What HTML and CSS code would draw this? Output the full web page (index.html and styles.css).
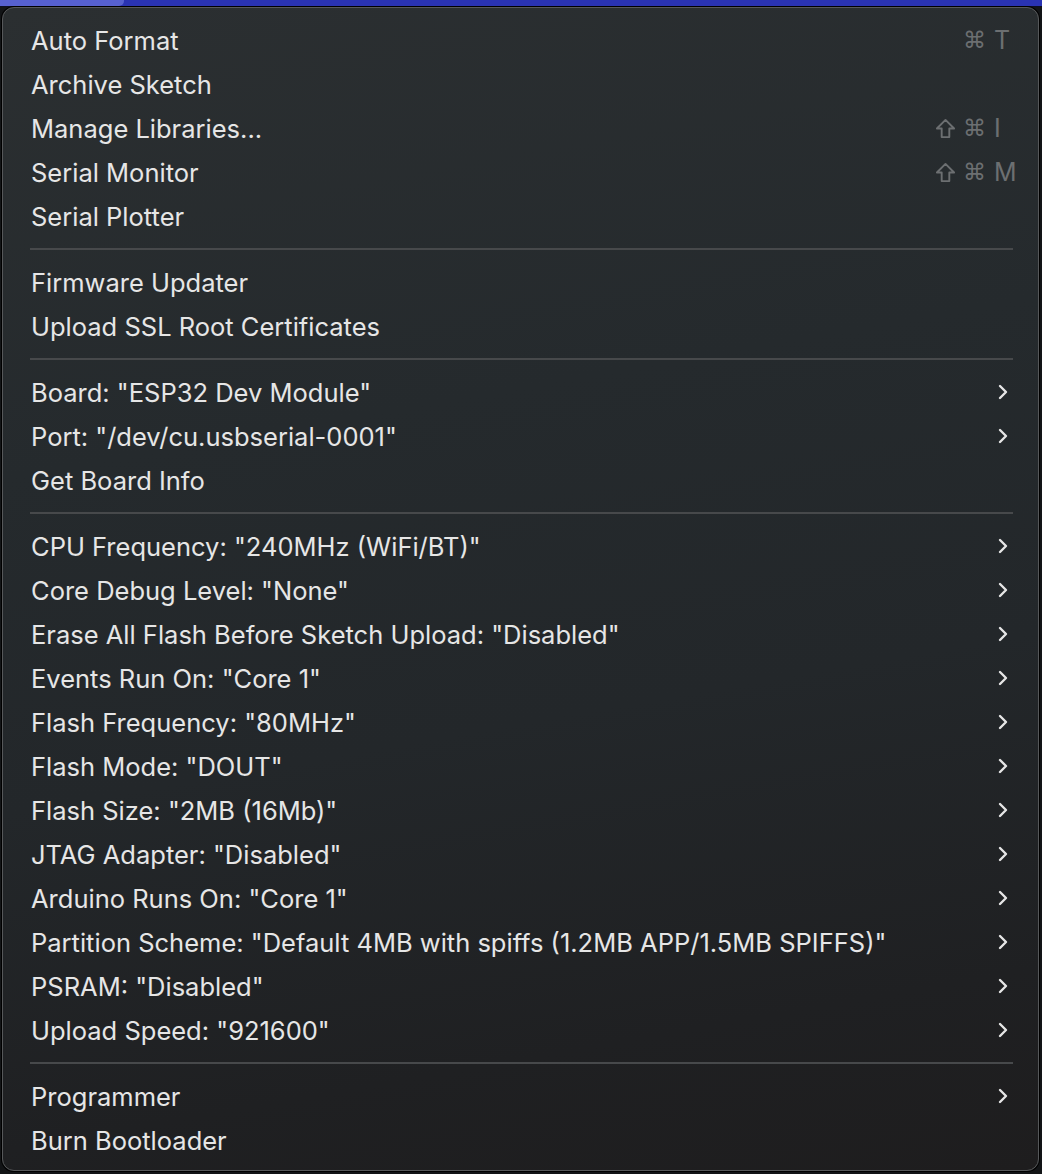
FILE: index.html
```html
<!DOCTYPE html>
<html>
<head>
<meta charset="utf-8">
<link rel="stylesheet" href="styles.css">
</head>
<body>
<div class="topbar"><div class="topbar-hl"></div></div>
<div class="menu">
  <div class="group">
    <div class="row"><span class="label">Auto Format</span><span class="sc"><span class="cmd">⌘</span><span class="key">T</span></span></div>
    <div class="row"><span class="label">Archive Sketch</span></div>
    <div class="row"><span class="label">Manage Libraries...</span><span class="sc"><svg class="shift" viewBox="0 0 22 22"><path d="M11 2 L20 11 L15 11 L15 20 L7 20 L7 11 L2 11 Z"/></svg><span class="cmd">⌘</span><span class="key">I</span></span></div>
    <div class="row"><span class="label">Serial Monitor</span><span class="sc"><svg class="shift" viewBox="0 0 22 22"><path d="M11 2 L20 11 L15 11 L15 20 L7 20 L7 11 L2 11 Z"/></svg><span class="cmd">⌘</span><span class="key">M</span></span></div>
    <div class="row"><span class="label">Serial Plotter</span></div>
  </div>
  <div class="sep"></div>
  <div class="group">
    <div class="row"><span class="label">Firmware Updater</span></div>
    <div class="row"><span class="label">Upload SSL Root Certificates</span></div>
  </div>
  <div class="sep"></div>
  <div class="group">
    <div class="row"><span class="label">Board: "ESP32 Dev Module"</span><svg class="chev" viewBox="0 0 10 16"><path d="M2 2 L8 8 L2 14"/></svg></div>
    <div class="row"><span class="label">Port: "/dev/cu.usbserial-0001"</span><svg class="chev" viewBox="0 0 10 16"><path d="M2 2 L8 8 L2 14"/></svg></div>
    <div class="row"><span class="label">Get Board Info</span></div>
  </div>
  <div class="sep"></div>
  <div class="group">
    <div class="row"><span class="label">CPU Frequency: "240MHz (WiFi/BT)"</span><svg class="chev" viewBox="0 0 10 16"><path d="M2 2 L8 8 L2 14"/></svg></div>
    <div class="row"><span class="label">Core Debug Level: "None"</span><svg class="chev" viewBox="0 0 10 16"><path d="M2 2 L8 8 L2 14"/></svg></div>
    <div class="row"><span class="label">Erase All Flash Before Sketch Upload: "Disabled"</span><svg class="chev" viewBox="0 0 10 16"><path d="M2 2 L8 8 L2 14"/></svg></div>
    <div class="row"><span class="label">Events Run On: "Core 1"</span><svg class="chev" viewBox="0 0 10 16"><path d="M2 2 L8 8 L2 14"/></svg></div>
    <div class="row"><span class="label">Flash Frequency: "80MHz"</span><svg class="chev" viewBox="0 0 10 16"><path d="M2 2 L8 8 L2 14"/></svg></div>
    <div class="row"><span class="label">Flash Mode: "DOUT"</span><svg class="chev" viewBox="0 0 10 16"><path d="M2 2 L8 8 L2 14"/></svg></div>
    <div class="row"><span class="label">Flash Size: "2MB (16Mb)"</span><svg class="chev" viewBox="0 0 10 16"><path d="M2 2 L8 8 L2 14"/></svg></div>
    <div class="row"><span class="label">JTAG Adapter: "Disabled"</span><svg class="chev" viewBox="0 0 10 16"><path d="M2 2 L8 8 L2 14"/></svg></div>
    <div class="row"><span class="label">Arduino Runs On: "Core 1"</span><svg class="chev" viewBox="0 0 10 16"><path d="M2 2 L8 8 L2 14"/></svg></div>
    <div class="row"><span class="label">Partition Scheme: "Default 4MB with spiffs (1.2MB APP/1.5MB SPIFFS)"</span><svg class="chev" viewBox="0 0 10 16"><path d="M2 2 L8 8 L2 14"/></svg></div>
    <div class="row"><span class="label">PSRAM: "Disabled"</span><svg class="chev" viewBox="0 0 10 16"><path d="M2 2 L8 8 L2 14"/></svg></div>
    <div class="row"><span class="label">Upload Speed: "921600"</span><svg class="chev" viewBox="0 0 10 16"><path d="M2 2 L8 8 L2 14"/></svg></div>
  </div>
  <div class="sep"></div>
  <div class="group">
    <div class="row"><span class="label">Programmer</span><svg class="chev" viewBox="0 0 10 16"><path d="M2 2 L8 8 L2 14"/></svg></div>
    <div class="row"><span class="label">Burn Bootloader</span></div>
  </div>
</div>
</body>
</html>
```

FILE: styles.css
```css
html, body {
  margin: 0;
  padding: 0;
}
body {
  width: 1042px;
  height: 1174px;
  overflow: hidden;
  background: #121416;
  font-family: Inter, "Noto Sans", "DejaVu Sans", sans-serif;
}
.topbar {
  height: 6px;
  background: #2a33b3;
  border-bottom: 1px solid #0c0e22;
  display: flex;
}
.topbar-hl {
  width: 124px;
  height: 6px;
  background: #5761d0;
  border-bottom-right-radius: 5px;
}
.menu {
  margin-left: 2px;
  width: 1037px;
  height: 1164px;
  box-sizing: border-box;
  border: 1px solid #56585a;
  border-radius: 12px;
  box-shadow: 0 0 0 1px #000;
  background: linear-gradient(170deg, #2b2f31 0%, #252a2d 35%, #23272a 60%, #1f2022 85%, #1e1d1e 100%);
  padding: 10px 0 0 0;
  color: #e6e6e6;
}
.row {
  height: 44px;
  display: flex;
  align-items: center;
  padding: 0 28px 0 28px;
  font-size: 25.5px;
}
.label {
  flex: 1;
  white-space: nowrap;
}
.sc {
  display: flex;
  align-items: center;
  color: #6c6f71;
}
.shift {
  width: 21px;
  height: 21px;
  margin-right: 7px;
  fill: none;
  stroke: #6c6f71;
  stroke-width: 2;
  stroke-linejoin: round;
}
.cmd {
  font-family: "DejaVu Sans", sans-serif;
  font-size: 23px;
}
.key {
  width: 20px;
  margin-left: 8px;
  margin-right: -4px;
  font-family: Inter, sans-serif;
  font-size: 25px;
}
.chev {
  width: 10px;
  height: 16px;
  margin-right: 2px;
  fill: none;
  stroke: #e6e6e6;
  stroke-width: 2.4;
  stroke-linecap: round;
  stroke-linejoin: round;
}
.sep {
  height: 22px;
  display: flex;
  align-items: center;
  padding: 0 25px 0 27px;
}
.sep::before {
  content: "";
  display: block;
  height: 2px;
  width: 100%;
  background: #47494b;
}
```
